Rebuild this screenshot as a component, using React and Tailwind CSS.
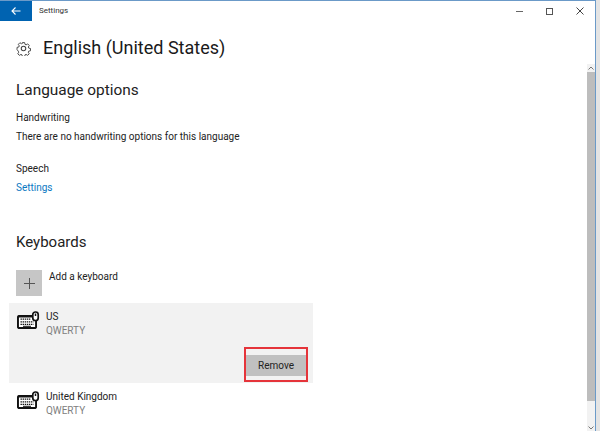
import React from 'react'

const KeyboardIcon = () => (
    <svg width="23" height="20" viewBox="0 0 23 20" fill="none" className="shrink-0">
        <path d="M15 5H2a1 1 0 0 0-1 1v10a1 1 0 0 0 1 1h16a1 1 0 0 0 1-1V9" stroke="#111" strokeWidth="1.800" fill="#fff"/>
        <path d="M1.500 6h14v4h3.500v6.500h-17.500z" fill="#fff"/>
        <path d="M1 5.500h14M1 16.800h18M1 5.500v11.300M19 9v7.800" stroke="#111" strokeWidth="1.800"/>
        <path d="M3.500 8.200h10M3.500 10.800h13M3.500 13.400h13" stroke="#111" strokeWidth="1.300" strokeDasharray="1.400 .7"/>
        <path d="M6 15.300h8" stroke="#111" strokeWidth="1"/>
        <rect x="15.800" y="1" width="5.400" height="8.500" rx="2.500" fill="#fff" stroke="#111" strokeWidth="1.700"/>
        <path d="M18.500 2.500v2.500" stroke="#111" strokeWidth="1.500"/>
    </svg>
)

const GearIcon = () => (
    <svg width="15" height="15" viewBox="0 0 24 24" fill="none" stroke="#444" strokeWidth="1.700" className="shrink-0">
        <circle cx="12" cy="12" r="3.600"/>
        <path d="M10 1.500h4l.7 3.200 1.900.8 2.800-1.700 2.800 2.800-1.700 2.800.8 1.900 3.200.7v4l-3.200.7-.8 1.900 1.700 2.800-2.800 2.800-2.800-1.700-1.900.8-.7 3.200h-4l-.7-3.200-1.900-.8-2.800 1.700-2.800-2.800 1.700-2.800-.8-1.900L.5 14v-4l3.200-.7.8-1.900-1.700-2.800 2.800-2.800 2.800 1.700 1.900-.8z" transform="translate(1.200 1.200) scale(.9)"/>
    </svg>
)

const KeyboardRow = ({name}) => (
    <div className="flex gap-[6px] pl-[8px]">
        <div className="pt-[8px]"><KeyboardIcon/></div>
        <div className="pt-[7px]">
            <div className="text-[10px] leading-[14px] text-[#222]">{name}</div>
            <div className="text-[10px] leading-[14px] text-[#808080]">QWERTY</div>
        </div>
    </div>
)

export default function App() {
    return (
        <div className="flex h-[431px] w-[600px] overflow-hidden bg-[#e4e4e4] font-['Roboto',sans-serif]">
            <div className="flex flex-1 flex-col border-t border-r border-[#6b9ac8] bg-white">
                <div className="flex h-[20px] shrink-0 items-center">
                    <div className="flex h-full w-[32px] items-center justify-center bg-[#0063b1]">
                        <svg width="10" height="10" viewBox="0 0 10 10" fill="none" stroke="#fff" strokeWidth="1.100">
                            <path d="M9.500 5H1M4.500 1.500 1 5l3.500 3.500"/>
                        </svg>
                    </div>
                    <div className="ml-[7px] text-[8px] text-[#333]">Settings</div>
                    <div className="ml-auto flex items-center gap-[23px] pr-[11px]">
                        <div className="h-px w-[7px] bg-[#666]"/>
                        <div className="h-[7px] w-[7px] border border-[#555]"/>
                        <svg width="8" height="8" viewBox="0 0 8 8" stroke="#444" strokeWidth="1">
                            <path d="M.5.5l7 7M7.500.5l-7 7"/>
                        </svg>
                    </div>
                </div>
                <div className="flex min-h-0 flex-1">
                    <div className="flex-1 pl-[16px] text-[#222]">
                        <div className="mt-[12px] flex items-center gap-[12px]">
                            <GearIcon/>
                            <h1 className="text-[18px] leading-[30px] text-[#1a1a1a]">English (United States)</h1>
                        </div>
                        <h2 className="mt-[16px] text-[15.4px] leading-[22px]">Language options</h2>
                        <div className="mt-[10px] text-[10px] leading-[14px]">Handwriting</div>
                        <div className="mt-[5px] text-[10px] leading-[14px]">There are no handwriting options for this language</div>
                        <div className="mt-[18px] text-[10px] leading-[14px]">Speech</div>
                        <div className="mt-[5px] text-[10px] leading-[14px] text-[#0a78c2]">Settings</div>
                        <h2 className="mt-[36px] text-[15px] leading-[22px]">Keyboards</h2>
                        <div className="mt-[17px] flex gap-[7px]">
                            <div className="flex h-[26px] w-[26px] items-center justify-center bg-[#c6c6c6]">
                                <svg width="11" height="11" viewBox="0 0 11 11" stroke="#555" strokeWidth="1">
                                    <path d="M5.500 0v11M0 5.500h11"/>
                                </svg>
                            </div>
                            <div className="text-[10px] leading-[14px]">Add a keyboard</div>
                        </div>
                        <div className="mt-[7px] ml-[-7px] flex h-[80px] w-[304px] flex-col bg-[#f2f2f2]">
                            <KeyboardRow name="US"/>
                            <div className="mt-auto mr-[7px] mb-[7px] flex justify-end">
                                <div className="relative flex h-[21px] w-[60px] items-center justify-center bg-[#c0c0c0] text-[10px] text-[#222]">
                                    Remove
                                    <div className="absolute top-[-8px] right-[-2px] bottom-[-6px] left-[-2px] border-2 border-[#e5343a]"/>
                                </div>
                            </div>
                        </div>
                        <div className="ml-[-7px] h-[48px]">
                            <KeyboardRow name="United Kingdom"/>
                        </div>
                    </div>
                    <div className="flex w-[8px] flex-col pt-[43px]">
                        <div className="flex h-[8px] items-center justify-center bg-[#f2f2f2]">
                            <svg width="6" height="4" viewBox="0 0 6 4" fill="none" stroke="#777"><path d="M.5 3.500 3 1l2.500 2.500"/></svg>
                        </div>
                        <div className="h-[329px] bg-[#bdbdbd]"/>
                        <div className="flex flex-1 items-end justify-center bg-[#f2f2f2] pb-px">
                            <svg width="6" height="4" viewBox="0 0 6 4" fill="none" stroke="#777"><path d="M.5.5 3 3 5.500.5"/></svg>
                        </div>
                    </div>
                </div>
            </div>
            <div className="w-[4px] shrink-0"/>
        </div>
    )
}
